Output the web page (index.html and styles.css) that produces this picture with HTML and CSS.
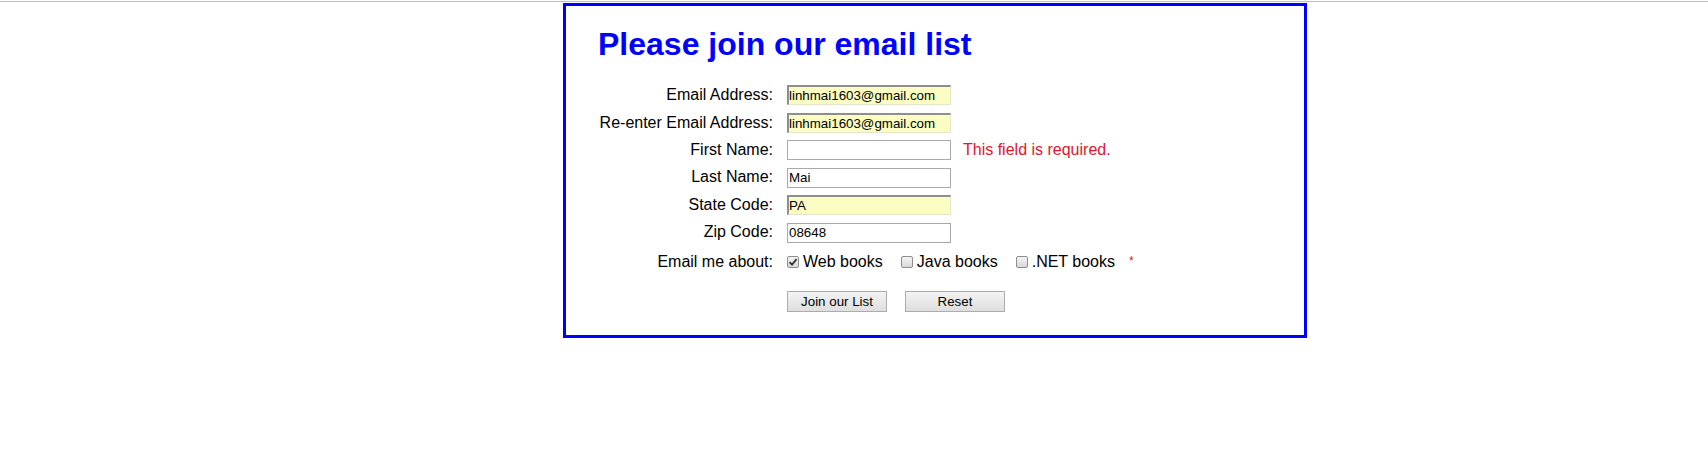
FILE: index.html
```html
<!DOCTYPE html>
<html lang="en">
<head>
<meta charset="utf-8">
<title>Email List</title>
<link rel="stylesheet" href="styles.css">
</head>
<body>
<div class="topline"></div>
<main class="panel">
  <h1 class="title">Please join our email list</h1>
  <form class="form">
    <div class="row">
      <label class="lbl" for="email">Email Address:</label>
      <input class="field autofill" id="email" type="text" value="linhmai1603@gmail.com">
    </div>
    <div class="row">
      <label class="lbl" for="email2">Re-enter Email Address:</label>
      <input class="field autofill" id="email2" type="text" value="linhmai1603@gmail.com">
    </div>
    <div class="row">
      <label class="lbl" for="first">First Name:</label>
      <input class="field" id="first" type="text" value="">
      <span class="error">This field is required.</span>
    </div>
    <div class="row">
      <label class="lbl" for="last">Last Name:</label>
      <input class="field" id="last" type="text" value="Mai">
    </div>
    <div class="row">
      <label class="lbl" for="state">State Code:</label>
      <input class="field autofill" id="state" type="text" value="PA">
    </div>
    <div class="row">
      <label class="lbl" for="zip">Zip Code:</label>
      <input class="field" id="zip" type="text" value="08648">
    </div>
    <div class="row row-checks">
      <span class="lbl">Email me about:</span>
      <div class="checks">
        <label class="check"><input class="box" type="checkbox" checked>Web books</label>
        <label class="check"><input class="box" type="checkbox">Java books</label>
        <label class="check"><input class="box" type="checkbox">.NET books</label>
        <span class="star">*</span>
      </div>
    </div>
    <div class="row row-buttons">
      <span class="lbl"></span>
      <div class="buttons">
        <button class="btn" type="button">Join our List</button>
        <button class="btn" type="reset">Reset</button>
      </div>
    </div>
  </form>
</main>
</body>
</html>
```
FILE: styles.css
```css
html, body {
  margin: 0;
  padding: 0;
  background: #ffffff;
}

body {
  font-family: "Liberation Sans", Arial, sans-serif;
  font-size: 16px;
  color: #000000;
}

.topline {
  height: 1px;
  margin-top: 1px;
  background: #bdbdbd;
}

.panel {
  box-sizing: border-box;
  width: 744px;
  margin: 1px 0 0 563px;
  border: 3px solid #0000ff;
  padding: 0 32px 23px 32px;
}

.title {
  margin: 20px 0 0 0;
  font-size: 32px;
  line-height: 36px;
  font-weight: bold;
  color: #0000ff;
}

.form {
  margin-top: 23px;
}

.row {
  display: grid;
  grid-template-columns: 189px 164px auto;
  align-items: baseline;
  margin-bottom: 7.5px;
}

.lbl {
  box-sizing: border-box;
  padding-right: 14px;
  text-align: right;
  white-space: nowrap;
}

.field {
  box-sizing: border-box;
  width: 164px;
  height: 20px;
  margin: 0;
  padding: 0 1px;
  border: 1px solid #a9a9a9;
  background: #ffffff;
  font-family: "Liberation Sans", Arial, sans-serif;
  font-size: 13.333px;
  color: #000000;
  outline: none;
}

.field.autofill {
  background: #fbfdc3;
  border-width: 2px 1px 1px 2px;
  border-color: #8f8f8a #e4e5cc #e4e5cc #8f8f8a;
  padding-left: 0;
}

.error {
  margin-left: 12px;
  color: #e0142e;
  white-space: nowrap;
}

.row-checks {
  margin-top: 10px;
}

.checks {
  grid-column: 2 / 4;
  display: flex;
  align-items: baseline;
}

.check {
  display: inline-flex;
  align-items: baseline;
  margin-right: 18px;
  white-space: nowrap;
}

.box {
  appearance: none;
  -webkit-appearance: none;
  box-sizing: border-box;
  width: 12px;
  height: 12px;
  margin: 0 4px 0 0;
  border: 1px solid #8e8e8e;
  border-radius: 2px;
  background: linear-gradient(#f4f4f4, #d9d9d9);
  position: relative;
  top: 1px;
}

.box:checked {
  background-image: url("data:image/svg+xml,%3Csvg xmlns='http://www.w3.org/2000/svg' width='10' height='10' viewBox='0 0 10 10'%3E%3Cpath d='M1.5 5.2 L4 7.6 L8.6 2.2' fill='none' stroke='%23333' stroke-width='1.8'/%3E%3C/svg%3E"), linear-gradient(#f4f4f4, #d9d9d9);
  background-repeat: no-repeat;
  background-position: center;
}

.star {
  margin-left: -4px;
  color: #e0142e;
  font-size: 12px;
  position: relative;
  top: -2px;
}

.row-buttons {
  margin-top: 20px;
  margin-bottom: 0;
}

.buttons {
  grid-column: 2 / 4;
  display: flex;
  gap: 18px;
}

.btn {
  box-sizing: border-box;
  width: 100px;
  height: 21px;
  margin: 0;
  padding: 0;
  border: 1px solid #acacac;
  border-radius: 0;
  background: linear-gradient(#f3f3f3, #dedede);
  font-family: "Liberation Sans", Arial, sans-serif;
  font-size: 13.333px;
  color: #000000;
}
```
